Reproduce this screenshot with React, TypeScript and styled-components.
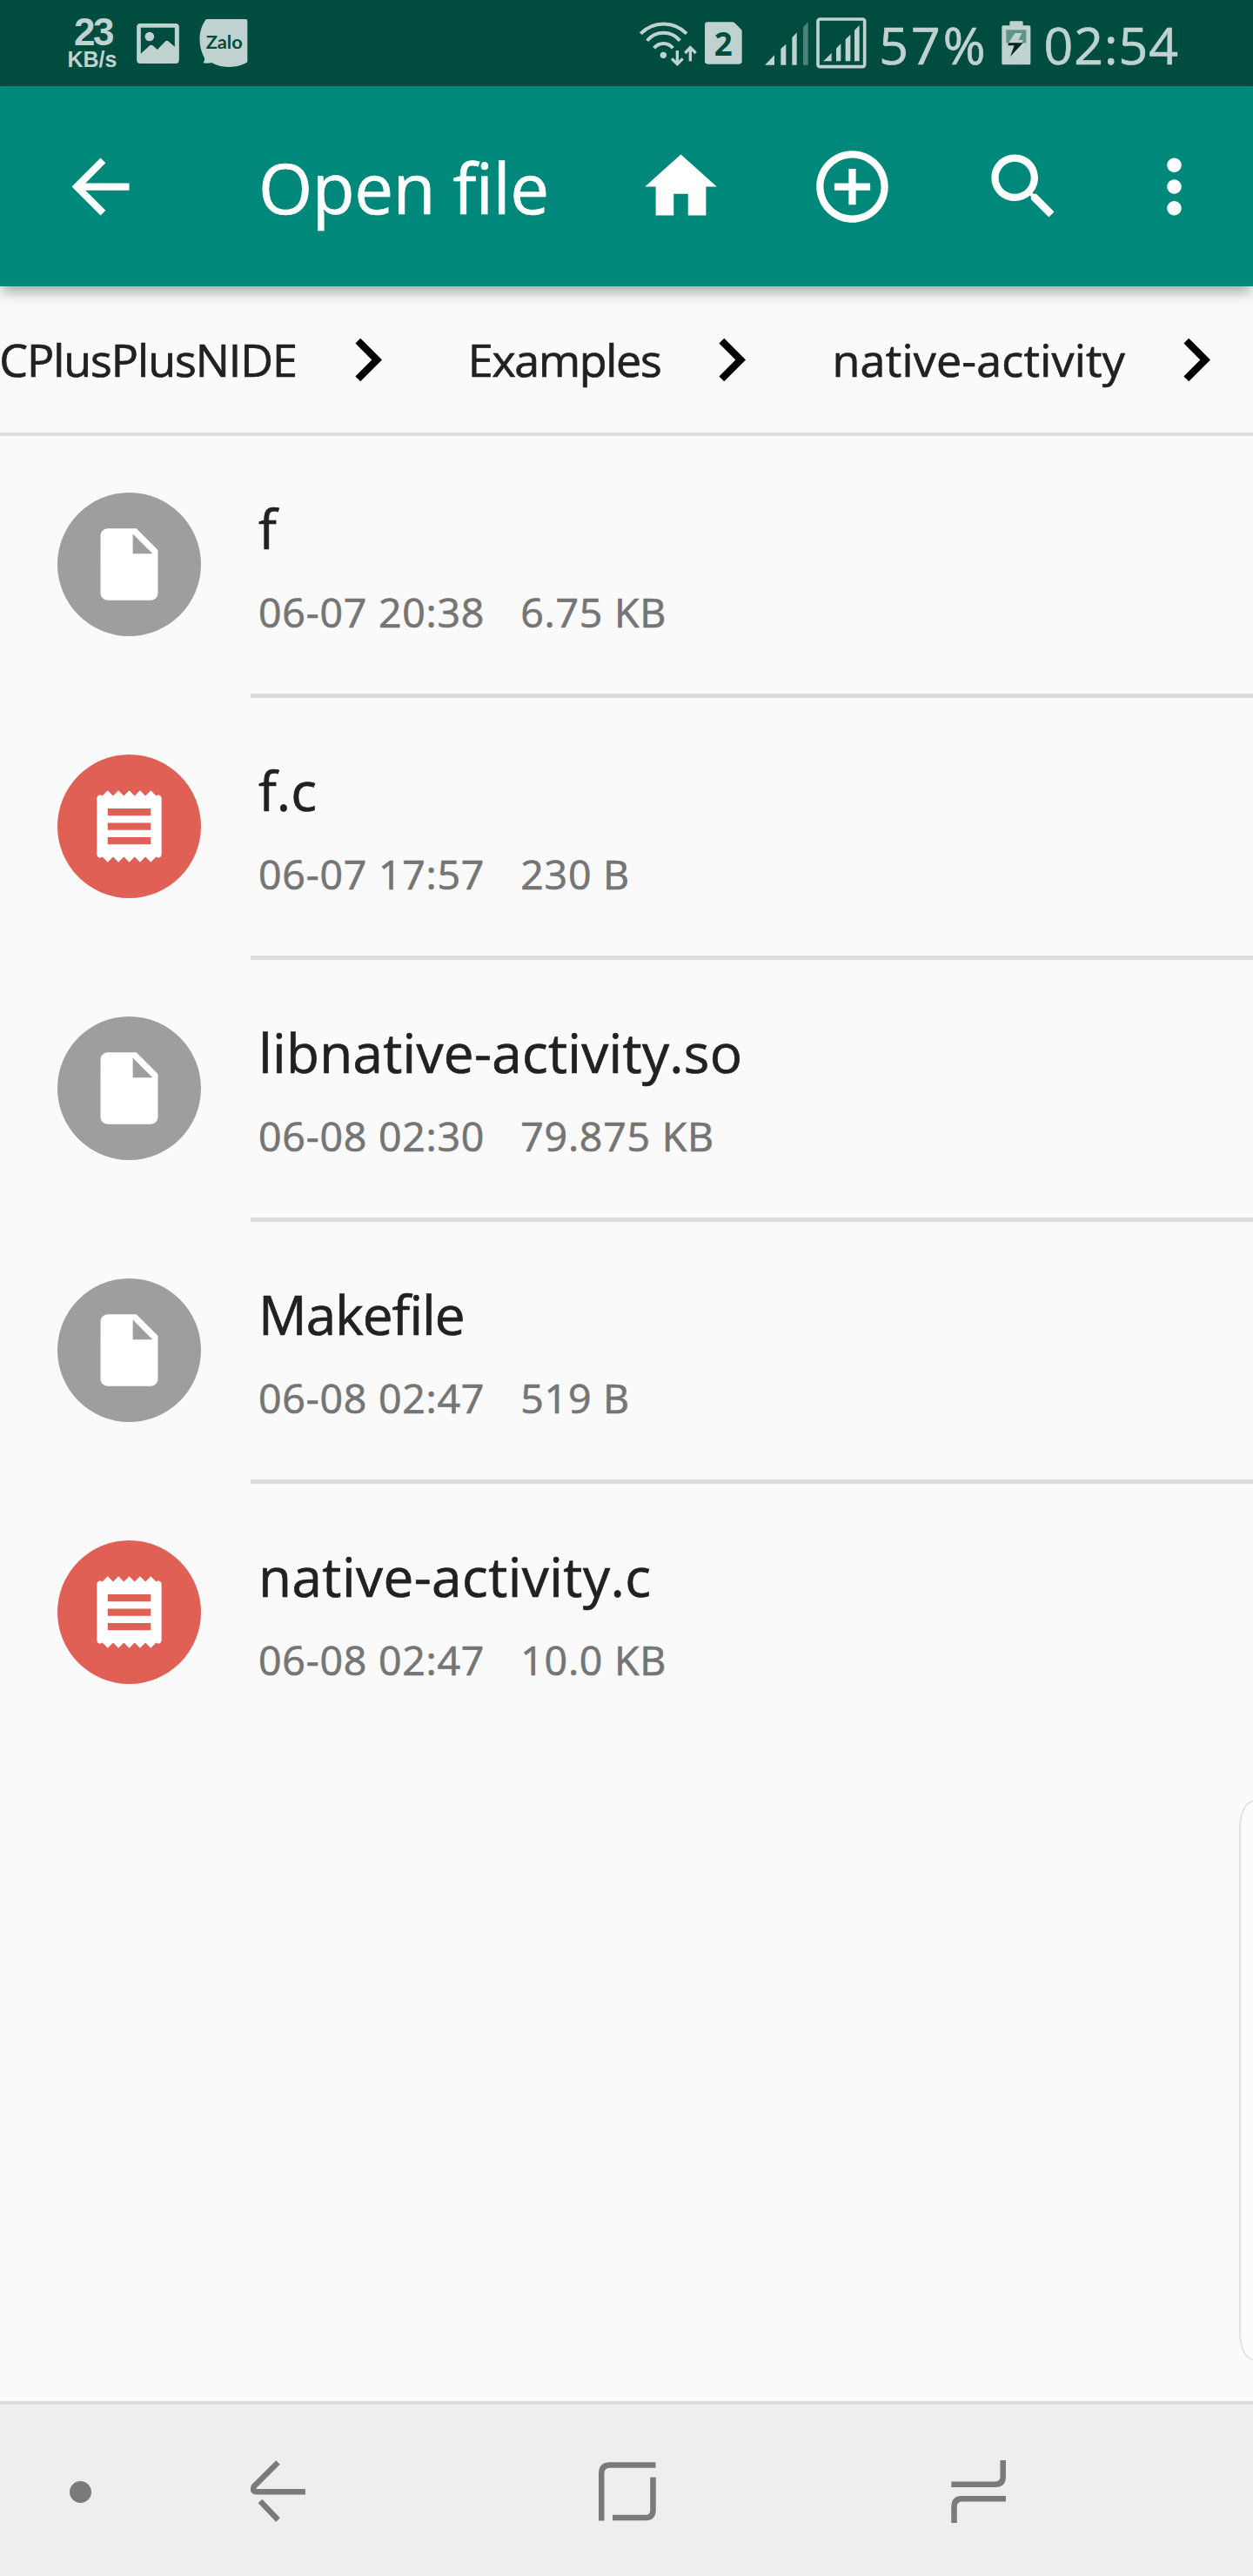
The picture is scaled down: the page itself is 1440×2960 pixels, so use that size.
import React from 'react';
import styled, { createGlobalStyle, css } from 'styled-components';

const GlobalStyle = createGlobalStyle`
  body {
    margin: 0;
    background: #fafafa;
  }
`;

const statusInk = '#bfd2cf';
const statusBg = '#004d40';
const navInk = '#7a7a7a';

// Slightly heavier than regular, lighter than semibold.
const bookWeight = css`
  font-weight: 400;
  -webkit-text-stroke: 0.7px currentColor;
`;

const Screen = styled.div`
  position: relative;
  display: flex;
  flex-direction: column;
  width: 1440px;
  height: 2960px;
  overflow: hidden;
  background: #fafafa;
  font-family: 'Open Sans', 'Noto Sans', sans-serif;
`;

const StatusBar = styled.header`
  display: flex;
  align-items: flex-start;
  justify-content: space-between;
  box-sizing: border-box;
  height: 99px;
  padding: 0 85px 0 77px;
  background: ${statusBg};
  color: ${statusInk};
`;

const StatusGroup = styled.div`
  display: flex;
  align-items: center;
  height: 99px;
`;

const NetSpeed = styled.div`
  display: flex;
  flex-direction: column;
  align-items: center;
  width: 58px;
  margin-right: 22px;
  font-family: 'Liberation Sans', sans-serif;
  font-weight: 700;
`;

const SpeedValue = styled.span`
  padding-left: 2px;
  font-size: 44px;
  line-height: 34px;
  letter-spacing: -2.5px;
`;

const SpeedUnit = styled.span`
  margin-top: 2px;
  font-size: 25px;
  line-height: 24px;
`;

const StatusText = styled.span<{ $track: number; $ml: number }>`
  ${bookWeight}
  margin-left: ${(p) => p.$ml}px;
  padding-top: 3px;
  font-size: 59px;
  line-height: 80px;
  letter-spacing: ${(p) => p.$track}px;
  white-space: nowrap;
`;

const Glyph = styled.svg<{ $ml?: number }>`
  display: block;
  flex: none;
  margin-left: ${(p) => p.$ml ?? 0}px;
`;

const Toolbar = styled.div`
  position: relative;
  display: flex;
  align-items: center;
  flex: none;
  box-sizing: border-box;
  height: 230px;
  padding: 0 41px 0 66px;
  background: #00897b;
  color: #fff;
  box-shadow: 0 9px 14px -2px rgba(0, 0, 0, 0.32);
`;

const Title = styled.h1`
  ${bookWeight}
  flex: 1;
  margin: 0 0 0 132px;
  padding-top: 2px;
  font-size: 80px;
  line-height: 110px;
  letter-spacing: -0.5px;
  white-space: nowrap;
`;

const IconButton = styled.button<{ $ml?: number }>`
  display: flex;
  flex: none;
  margin: 0 0 0 ${(p) => p.$ml ?? 0}px;
  padding: 0;
  border: 0;
  background: none;
  color: inherit;
`;

const Breadcrumbs = styled.nav`
  display: flex;
  align-items: center;
  justify-content: flex-end;
  flex: none;
  height: 168px;
  padding-right: 16px;
  border-bottom: 4px solid #dcdcdc;
  color: #000;
`;

const Crumb = styled.div`
  display: flex;
  align-items: center;
  flex: none;
`;

const CrumbLabel = styled.span<{ $track: number }>`
  ${bookWeight}
  padding: 0 32px 0 66px;
  font-size: 52px;
  line-height: 72px;
  letter-spacing: ${(p) => p.$track}px;
  color: #212121;
  white-space: nowrap;
`;

const FileList = styled.ul`
  flex: 1;
  margin: 0;
  padding: 0;
  list-style: none;
`;

const FileRow = styled.li`
  display: flex;
  height: 301px;
  padding-left: 66px;

  &:last-child > div {
    border-bottom-color: transparent;
  }
`;

const Avatar = styled.span<{ $color: string }>`
  display: flex;
  align-items: center;
  justify-content: center;
  flex: none;
  width: 165px;
  height: 165px;
  margin-top: 65px;
  border-radius: 50%;
  background: ${(p) => p.$color};
  color: #fff;
`;

const FileInfo = styled.div`
  flex: 1;
  box-sizing: border-box;
  margin-left: 57px;
  padding: 61px 0 0 9px;
  border-bottom: 5px solid #dcdcdc;
`;

const FileName = styled.div<{ $track: number }>`
  ${bookWeight}
  font-size: 62px;
  line-height: 90px;
  letter-spacing: ${(p) => p.$track}px;
  color: #212121;
  white-space: nowrap;
`;

const FileMeta = styled.div`
  ${bookWeight}
  display: flex;
  gap: 41px;
  margin-top: 19px;
  font-size: 46.5px;
  line-height: 64px;
  letter-spacing: 0.75px;
  color: #757575;
  white-space: nowrap;
`;

const EdgeHandle = styled.div`
  position: absolute;
  top: 2069px;
  right: -4px;
  width: 18px;
  height: 639px;
  border: 2px solid #e2e2e2;
  border-right: 0;
  border-radius: 16px 0 0 16px / 32px 0 0 32px;
  background: #fcfcfc;
`;

const NavBar = styled.footer`
  display: flex;
  align-items: center;
  flex: none;
  box-sizing: border-box;
  height: 201px;
  padding: 3px 0 0 80px;
  border-top: 4px solid #dcdcdc;
  background: #eee;
`;

const NavDot = styled.span`
  width: 25px;
  height: 25px;
  border-radius: 50%;
  background: ${navInk};
`;

const paths = {
  back: 'M20 11H7.83l5.59-5.59L12 4l-8 8 8 8 1.41-1.41L7.83 13H20v-2z',
  home: 'M10 20v-6h4v6h5v-8h3L12 3 2 12h3v8z',
  add: 'M13 7h-2v4H7v2h4v4h2v-4h4v-2h-4V7zm-1-5C6.48 2 2 6.48 2 12s4.48 10 10 10 10-4.48 10-10S17.52 2 12 2zm0 18c-4.41 0-8-3.59-8-8s3.59-8 8-8 8 3.59 8 8-3.59 8-8 8z',
  search:
    'M15.5 14h-.79l-.28-.27C15.41 12.59 16 11.11 16 9.5 16 5.91 13.09 3 9.5 3S3 5.91 3 9.5 5.91 16 9.5 16c1.61 0 3.09-.59 4.23-1.57l.27.28v.79l5 4.99L20.49 19l-4.99-5zm-6 0C7.01 14 5 11.99 5 9.5S7.01 5 9.5 5 14 7.01 14 9.5 11.99 14 9.5 14z',
  more: 'M12 8c1.1 0 2-.9 2-2s-.9-2-2-2-2 .9-2 2 .9 2 2 2zm0 2c-1.1 0-2 .9-2 2s.9 2 2 2 2-.9 2-2-.9-2-2-2zm0 6c-1.1 0-2 .9-2 2s.9 2 2 2 2-.9 2-2-.9-2-2-2z',
  chevron: 'M10 6L8.59 7.41 13.17 12l-4.58 4.59L10 18l6-6z',
  file: 'M6 2c-1.1 0-1.99.9-1.99 2L4 20c0 1.1.89 2 1.99 2H18c1.1 0 2-.9 2-2V8l-6-6H6zm7 7V3.5L18.5 9H13z',
  receipt:
    'M18 17H6v-2h12zm0-4H6v-2h12zm0-4H6V7h12zM3 20v-16Q3.1 3.4 3.9 3.2L4.5 3.5 6 2l1.5 1.5L9 2l1.5 1.5L12 2l1.5 1.5L15 2l1.5 1.5L18 2l1.5 1.5.6-.3Q20.9 3.4 21 4v16Q20.9 20.6 20.1 20.8L19.5 20.5 18 22l-1.5-1.5L15 22l-1.5-1.5L12 22l-1.5-1.5L9 22l-1.5-1.5L6 22l-1.5-1.5-.6.3Q3.1 20.6 3 20z',
};

const Icon = ({ name }: { name: keyof typeof paths }) => (
  <Glyph width="99" height="99" viewBox="0 0 24 24" fill="currentColor">
    <path d={paths[name]} fillRule="evenodd" />
  </Glyph>
);

const PictureIcon = () => (
  <Glyph width="49" height="46" viewBox="0 0 146 138">
    <path
      fillRule="evenodd"
      fill={statusInk}
      d="M12 0H134Q146 0 146 12V126Q146 138 134 138H12Q0 138 0 126V12Q0 0 12 0ZM14 14V104L43 77Q50 71 57 77L71 90L97 63Q104 56 111 63L131 80V14Z"
    />
    <circle cx="44" cy="45" r="16" fill={statusInk} />
  </Glyph>
);

const ZaloIcon = () => (
  <Glyph $ml={23} width="56" height="56" viewBox="0 0 168 168">
    <path
      fill={statusInk}
      d="M24 0H160Q166 0 166 6V148C148 160 126 165 104 165C80 165 60 160 43 150Q28 154 13 151Q20 144 18 134C-4 96 -6 38 24 0Z"
    />
    <text
      x="23"
      y="102"
      fill={statusBg}
      fontFamily="Lato, sans-serif"
      fontWeight="700"
      fontSize="64"
      textLength="126"
      lengthAdjust="spacingAndGlyphs"
    >
      Zalo
    </text>
  </Glyph>
);

const WifiIcon = () => (
  <Glyph width="70" height="55" viewBox="30 60 210 165" fill="none" stroke={statusInk}>
    <path strokeWidth="12" d="M43 110A110 110 0 0 1 201 110M65 134A73 73 0 0 1 178 134M89 160A41 41 0 0 1 154 160" />
    <circle cx="121" cy="184" r="11" fill={statusInk} stroke="none" />
    <path strokeWidth="10" d="M169 168V214M150 196L169 215L188 196M214 205V159M196 177L214 158L233 177" />
  </Glyph>
);

const SimIcon = () => (
  <Glyph $ml={8} width="43" height="49" viewBox="264 71 129 147">
    <path
      fill={statusInk}
      d="M274 72H358Q364 72 368 76L388 96Q392 100 392 106V207Q392 217 382 217H274Q264 217 264 207V82Q264 72 274 72Z"
    />
    <text
      x="328"
      y="189"
      textAnchor="middle"
      fill={statusBg}
      fontFamily="'Open Sans', sans-serif"
      fontWeight="700"
      fontSize="110"
    >
      2
    </text>
  </Glyph>
);

const SignalIcon = () => (
  <Glyph $ml={26} width="50" height="50" viewBox="470 73 150 150" fill={statusInk}>
    <path d="M470 222L503 188V222ZM525 166L543 150V222H525ZM564 128L580 110V222H564Z" />
    <path fill="#4d827a" d="M602 92L619 74V222H602Z" />
  </Glyph>
);

const BoxedSignalIcon = () => (
  <Glyph $ml={9} width="58" height="59" viewBox="647 59 174 177" fill={statusInk}>
    <rect x="653" y="65" width="161" height="164" rx="7" fill="none" stroke={statusInk} strokeWidth="11" />
    <path d="M672 210L700 182V210ZM716 166L732 149V210H716ZM748 135L765 118V210H748ZM779 104L796 86V210H779Z" />
  </Glyph>
);

const BatteryIcon = () => (
  <Glyph $ml={15} width="34" height="51" viewBox="269 71 102 153" fill={statusInk}>
    <path d="M301 72H339Q343 72 343 76V87H364Q369 87 369 92V217Q369 222 364 222H275Q270 222 270 217V92Q270 87 275 87H297V76Q297 72 301 72Z" />
    <rect x="285" y="102" width="69" height="45" fill="#5f938b" />
    <path d="M315 113H339L328 137H343L340 147H293Z" />
    <path fill="#06251f" d="M293 147H343L299 194L313 156H291Z" />
  </Glyph>
);

const NavBack = () => (
  <Glyph $ml={183} width="64" height="72" viewBox="288 2827 64 72" fill="none" stroke={navInk} strokeWidth="6.5">
    <path d="M319.5 2829.5L292 2857Q289 2863.3 295 2863.3H351M299 2874L319.5 2895.5" />
  </Glyph>
);

const NavHome = () => (
  <Glyph $ml={336} width="66" height="70" viewBox="688 2828 66 70" fill="none" stroke={navInk} strokeWidth="6.5">
    <path d="M691.25 2896.5V2842Q691.25 2832.5 701 2832.5H753.5M704 2893H742Q750.5 2893 750.5 2884V2846.5" />
  </Glyph>
);

const NavRecents = () => (
  <Glyph $ml={339} width="64" height="74" viewBox="1093 2826 64 74" fill="none" stroke={navInk} strokeWidth="6.5">
    <path d="M1152.7 2827V2846Q1152.7 2854.7 1144 2854.7H1093.3M1155.9 2871.2H1105Q1096.5 2871.2 1096.5 2881V2899" />
  </Glyph>
);

const crumbs = [
  { label: 'CPlusPlusNIDE', track: -1.05 },
  { label: 'Examples', track: -1.3 },
  { label: 'native-activity', track: 0.2 },
];

type FileEntry = { name: string; date: string; size: string; track?: number; source?: boolean };

const files: FileEntry[] = [
  { name: 'f', date: '06-07 20:38', size: '6.75 KB' },
  { name: 'f.c', date: '06-07 17:57', size: '230 B', source: true },
  { name: 'libnative-activity.so', date: '06-08 02:30', size: '79.875 KB', track: 0.3 },
  { name: 'Makefile', date: '06-08 02:47', size: '519 B', track: -1 },
  { name: 'native-activity.c', date: '06-08 02:47', size: '10.0 KB', track: 0.45, source: true },
];

export default function App() {
  return (
    <Screen>
      <GlobalStyle />
      <StatusBar>
        <StatusGroup>
          <NetSpeed>
            <SpeedValue>23</SpeedValue>
            <SpeedUnit>KB/s</SpeedUnit>
          </NetSpeed>
          <PictureIcon />
          <ZaloIcon />
        </StatusGroup>
        <StatusGroup>
          <WifiIcon />
          <SimIcon />
          <SignalIcon />
          <BoxedSignalIcon />
          <StatusText $track={3} $ml={14}>57%</StatusText>
          <BatteryIcon />
          <StatusText $track={1} $ml={15}>02:54</StatusText>
        </StatusGroup>
      </StatusBar>
      <Toolbar>
        <IconButton aria-label="Back">
          <Icon name="back" />
        </IconButton>
        <Title>Open file</Title>
        <IconButton aria-label="Home">
          <Icon name="home" />
        </IconButton>
        <IconButton aria-label="Add" $ml={98}>
          <Icon name="add" />
        </IconButton>
        <IconButton aria-label="Search" $ml={98}>
          <Icon name="search" />
        </IconButton>
        <IconButton aria-label="More" $ml={74}>
          <Icon name="more" />
        </IconButton>
      </Toolbar>
      <Breadcrumbs>
        {crumbs.map((crumb) => (
          <Crumb key={crumb.label}>
            <CrumbLabel $track={crumb.track}>{crumb.label}</CrumbLabel>
            <Icon name="chevron" />
          </Crumb>
        ))}
      </Breadcrumbs>
      <FileList>
        {files.map((file) => (
          <FileRow key={file.name}>
            <Avatar $color={file.source ? '#e06055' : '#9e9e9e'}>
              <Icon name={file.source ? 'receipt' : 'file'} />
            </Avatar>
            <FileInfo>
              <FileName $track={file.track ?? 0}>{file.name}</FileName>
              <FileMeta>
                <span>{file.date}</span>
                <span>{file.size}</span>
              </FileMeta>
            </FileInfo>
          </FileRow>
        ))}
      </FileList>
      <EdgeHandle />
      <NavBar>
        <NavDot />
        <NavBack />
        <NavHome />
        <NavRecents />
      </NavBar>
    </Screen>
  );
}
